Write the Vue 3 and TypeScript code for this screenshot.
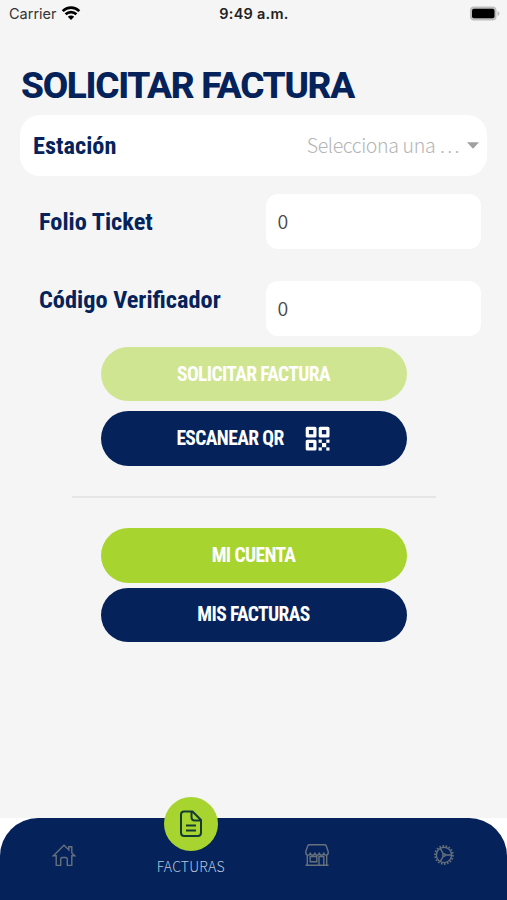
<script setup lang="ts">
import { ref } from 'vue'

interface Field {
  id: string
  label: string
  value: string
}

const fields = ref<Field[]>([
  { id: 'folio', label: 'Folio Ticket', value: '0' },
  { id: 'codigo', label: 'Código Verificador', value: '0' },
])
</script>

<template>
  <div class="screen">
    <header class="status">
      <div class="carrier">
        <span>Carrier</span>
        <svg class="wifi" width="20" height="16" viewBox="0 0 20 16">
          <path d="M1.700 5.100C6.300 .5 13.700 .5 18.300 5.100" />
          <path d="M4.600 8.200C7.600 5.300 12.400 5.300 15.400 8.200" />
          <path class="solid" d="M10 14.100l-3.200-3.300c1.800-1.700 4.600-1.700 6.400 0z" />
        </svg>
      </div>
      <span class="clock">9:49 a.m.</span>
      <svg class="battery" width="32" height="16" viewBox="0 0 32 16">
        <rect x="1" y=".5" width="26.500" height="14" rx="4" fill="#bdbdbd" />
        <path d="M28.500 5.200c2.600.6 2.600 4.100 0 4.700z" fill="#bdbdbd" />
        <rect x="3" y="2.700" width="22.500" height="9.600" rx="2" fill="#000" />
      </svg>
    </header>

    <main class="content">
      <h1>SOLICITAR FACTURA</h1>

      <div class="select">
        <span class="label">Estación</span>
        <span class="placeholder">Selecciona una …</span>
        <svg class="caret" width="12" height="7" viewBox="0 0 12 7"><path d="M0 .3h12L6 6.700z" /></svg>
      </div>

      <div v-for="field in fields" :key="field.id" class="field" :class="field.id">
        <span class="label">{{ field.label }}</span>
        <div class="input">{{ field.value }}</div>
      </div>

      <div class="actions">
        <button class="lime disabled"><span>SOLICITAR FACTURA</span></button>
        <button class="navy scan">
          <span>ESCANEAR QR</span>
          <svg width="26" height="26" viewBox="0 0 26 26">
            <g fill="none" stroke="#fff" stroke-width="3.200" stroke-linejoin="round">
              <rect x="2.300" y="2.300" width="7.600" height="7.600" />
              <rect x="15.300" y="2.300" width="7.600" height="7.600" />
              <rect x="2.300" y="15.300" width="7.600" height="7.600" />
            </g>
            <g fill="#fff">
              <rect x="13.600" y="13.600" width="3.200" height="3.200" />
              <rect x="21.300" y="13.600" width="3.200" height="3.200" />
              <rect x="17" y="17" width="4.200" height="4.200" />
              <rect x="13.600" y="21.400" width="3.200" height="3.200" />
              <rect x="21.300" y="21.400" width="3.200" height="3.200" />
            </g>
          </svg>
        </button>
      </div>

      <hr />

      <div class="actions account">
        <button class="lime"><span>MI CUENTA</span></button>
        <button class="navy"><span>MIS FACTURAS</span></button>
      </div>
    </main>

    <footer class="dock">
      <nav>
        <a class="tab">
          <svg width="24" height="24" viewBox="0 0 24 24">
            <path d="M1.400 12.700L12 2.200l4.800 4.700V3.700h3v6.200l2.800 2.800h-2.800v9.700h-4.500v-6.200q0-1.700-1.700-1.700h-3.200q-1.700 0-1.700 1.700v6.200H4.200v-9.700z" />
          </svg>
        </a>
        <a class="tab active">
          <span class="bubble">
            <svg width="24" height="28" viewBox="0 0 24 28">
              <path d="M13.500 1.500H5.200Q2 1.500 2 4.700v18.100Q2 26 5.200 26h13.600q3.200 0 3.200-3.200V10zM12.500 1.800v5.500q0 3.200 3.200 3.200h6M7 15.500h10M7 20.500h10" />
            </svg>
          </span>
          <span class="caption">FACTURAS</span>
        </a>
        <a class="tab">
          <svg width="24" height="24" viewBox="0 0 24 24">
            <path d="M4.400 1.800h15.200q1.200 0 1.600 1l2 5.700v2M2.800 2.800q.4-1 1.600-1M2.800 2.800l-2 5.700v2M.8 9.500c0 3.500 4.500 3.500 4.500 0 0 3.500 4.500 3.500 4.500 0 0 3.500 4.500 3.500 4.500 0 0 3.500 4.500 3.500 4.500 0 0 3.500 4.400 3.500 4.400 0M2.300 11.500v10.600M21.700 11.500v10.600M.5 22.300h23M5.200 13.500h6.600v5.300H5.200zM14 22v-8.500h4.800V22" />
          </svg>
        </a>
        <a class="tab">
          <svg width="24" height="24" viewBox="0 0 24 24">
            <circle cx="12" cy="12" r="7.600" />
            <circle class="teeth" cx="12" cy="12" r="9" pathLength="72" />
            <circle cx="12" cy="12" r="1.300" />
            <path d="M13.300 12h6.300M11.400 10.900L8.200 5.400M11.400 13.100l-3.200 5.500" />
          </svg>
        </a>
      </nav>
    </footer>
  </div>
</template>

<style>
body {
  margin: 0;
}
</style>

<style scoped>
.screen {
  width: 507px;
  height: 900px;
  display: flex;
  flex-direction: column;
  overflow: hidden;
  background: #f5f5f5;
  font-family: 'Roboto', sans-serif;
  color: #05235a;
}
.status {
  height: 28px;
  box-sizing: border-box;
  padding: 0 6px 1px 9px;
  display: grid;
  grid-template-columns: 1fr auto 1fr;
  align-items: center;
  font: 400 14.500px 'Inter', sans-serif;
  color: #333;
}
.carrier {
  display: flex;
  align-items: center;
  gap: 4px;
}
.wifi {
  fill: none;
  stroke: #000;
  stroke-width: 2.700;
}
.wifi .solid {
  fill: #000;
  stroke: none;
}
.clock {
  margin-right: 2px;
  font-weight: 600;
  color: #222;
  letter-spacing: 0.250px;
}
.battery {
  justify-self: end;
}
.content {
  flex: 1;
  padding: 37px 20px 0;
}
h1 {
  margin: 0 0 7px 1px;
  font-size: 37px;
  line-height: 42px;
  height: 42.500px;
  font-weight: 800;
  letter-spacing: -1.320px;
  white-space: nowrap;
}
.label {
  font-size: 24.350px;
  font-weight: 700;
  font-stretch: 75%;
  font-family: 'Roboto Condensed', 'Roboto', sans-serif;
  white-space: nowrap;
}
.select {
  height: 61.500px;
  box-sizing: border-box;
  padding: 0 8px 0 13px;
  display: flex;
  align-items: center;
  border-radius: 20px;
  background: #fff;
}
.placeholder {
  margin-left: auto;
  padding-bottom: 2px;
  font: 300 19.500px 'Noto Sans CJK SC', sans-serif;
  letter-spacing: -0.350px;
  color: #b5b5b5;
}
.caret {
  margin-left: 8px;
  fill: #a0a0a0;
}
.field {
  display: flex;
  justify-content: space-between;
  align-items: center;
  height: 55px;
  padding: 0 6px 0 19px;
  margin-top: 18px;
}
.field.codigo {
  margin-top: 32px;
}
.codigo .label {
  padding-bottom: 19px;
}
.input {
  width: 215.500px;
  height: 55px;
  box-sizing: border-box;
  padding-left: 12px;
  border-radius: 12px;
  background: #fff;
  font: 350 19.500px/53px 'Noto Sans CJK SC', sans-serif;
  color: #4a4a4a;
}
.actions {
  display: flex;
  flex-direction: column;
  align-items: center;
  gap: 10px;
  margin-top: 10.500px;
}
button {
  width: 306px;
  height: 54.500px;
  border: 0;
  padding: 0;
  border-radius: 28px;
  display: flex;
  align-items: center;
  justify-content: center;
  font: 700 19.500px 'Roboto Condensed', 'Roboto', sans-serif;
  font-stretch: 75%;
  letter-spacing: -0.600px;
  color: #fff;
}
.lime {
  background: #a8d42f;
}
.disabled {
  background: #cfe592;
}
.disabled span {
  padding-top: 1px;
}
.navy {
  background: #05235a;
}
.scan {
  gap: 21px;
}
.scan svg {
  margin-top: 1px;
}
hr {
  width: 364px;
  height: 2px;
  margin: 30px auto 0;
  border: 0;
  background: #e5e5e5;
}
.account {
  gap: 5px;
  margin-top: 30.500px;
}
.dock {
  height: 82px;
  background: #fff;
}
nav {
  height: 82px;
  display: grid;
  grid-template-columns: repeat(4, 1fr);
  padding-left: 1px;
  border-radius: 38px 38px 0 0;
  background: #05235a;
}
.tab {
  display: flex;
  flex-direction: column;
  align-items: center;
  padding-top: 25px;
}
.tab > svg {
  fill: none;
  stroke: #66717c;
  stroke-width: 1.400;
}
.tab .teeth {
  stroke-width: 1.800;
  stroke-dasharray: 2 2;
}
.active {
  padding-top: 0;
}
.bubble {
  width: 54px;
  height: 54px;
  margin-top: -21px;
  flex: none;
  display: flex;
  align-items: center;
  justify-content: center;
  border-radius: 50%;
  background: #a8d42f;
}
.bubble svg {
  fill: none;
  stroke: #123b35;
  stroke-width: 2;
}
.caption {
  margin-top: 5px;
  font: 300 14px/20px 'Noto Sans CJK SC', sans-serif;
  letter-spacing: 0.200px;
  color: #b5c6df;
}
</style>
